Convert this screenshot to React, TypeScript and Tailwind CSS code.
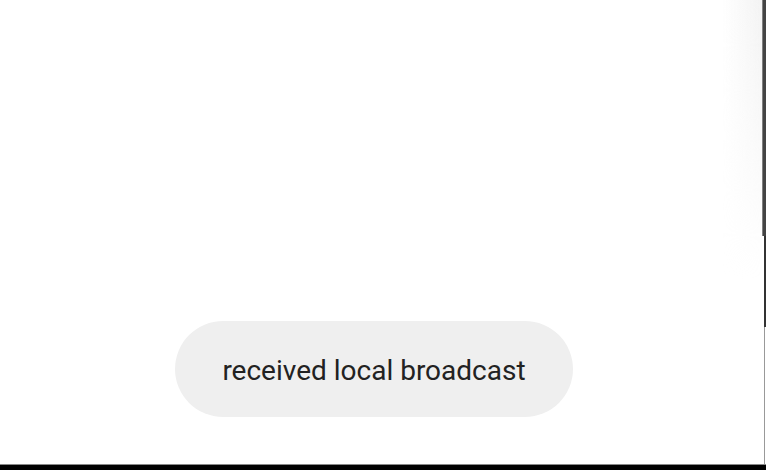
import React from "react";

export default function App() {
  return (
    <div className="w-[766px] h-[470px] flex flex-col bg-black overflow-hidden">
      <div className="flex flex-1 min-h-0">
        <div className="relative flex-1 bg-white flex flex-col justify-end pl-[175px] pb-[47px]">
          <div className="absolute right-0 top-0 w-[40px] h-[280px] bg-gradient-to-l from-[#f3f3f3] to-transparent [mask-image:linear-gradient(to_bottom,black,transparent)]" />
          <div
            className="relative w-[398px] h-[96px] rounded-full bg-[#efefef] flex items-center justify-center pt-[3px] text-[#222222] text-[28px]"
            style={{ fontFamily: "Roboto, sans-serif" }}
          >
            received local broadcast
          </div>
        </div>
        <div className="w-[4px] flex flex-col">
          <div className="h-[236px] flex">
            <div className="w-[1px] bg-[#808080]" />
            <div className="flex-1 bg-[#444444]" />
          </div>
          <div className="h-[91px] flex">
            <div className="w-[2px] bg-white" />
            <div className="flex-1 bg-[#333333]" />
          </div>
          <div className="flex-1 flex">
            <div className="w-[2px] bg-white" />
            <div className="w-[1px] bg-[#999999]" />
            <div className="flex-1 bg-white" />
          </div>
        </div>
      </div>
      <div className="h-[1px] bg-[#888888]" />
      <div className="h-[5px] bg-black" />
    </div>
  );
}
